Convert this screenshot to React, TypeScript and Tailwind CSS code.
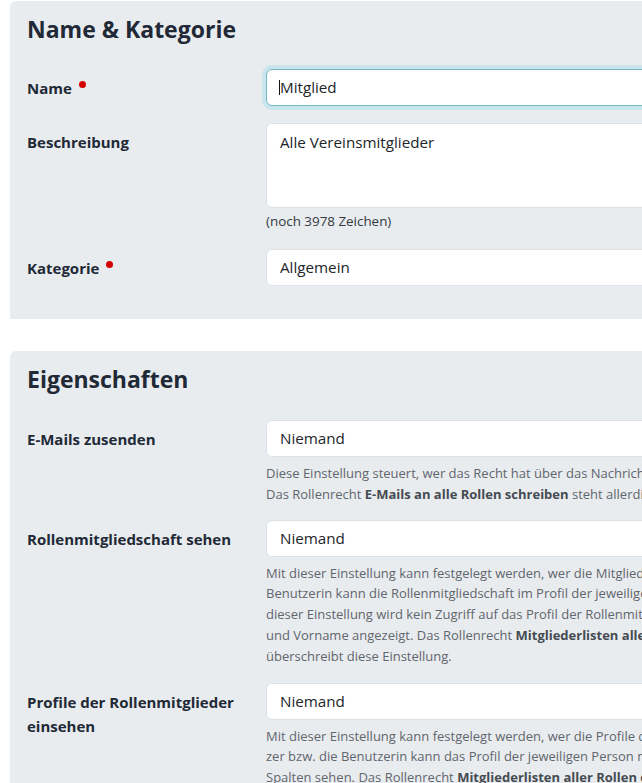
import React from 'react';

const font = { fontFamily: '"Open Sans", "Noto Sans", sans-serif' };

const Required = () => (
  <span className="inline-block w-[7px] h-[7px] rounded-full bg-[#d40000] ml-[7px] relative -top-[6px]" />
);

const Label = ({ children, required }: { children: React.ReactNode; required?: boolean }) => (
  <div className="w-[239px] shrink-0 pt-[7px] pr-4 text-[15px] leading-6 font-bold text-[#212936]">
    {children}
    {required && <Required />}
  </div>
);

const Field = ({ value, focused }: { value: string; focused?: boolean }) => (
  <div
    className={
      focused
        ? 'h-[37px] w-[640px] rounded-[6px] border border-[#72b7c2] bg-white pl-[12px] flex items-center text-[15.2px] text-[#212529] shadow-[0_0_0_4px_#c9e6ec]'
        : 'h-[37px] w-[640px] rounded-[6px] border border-[#dee2e6] bg-white pl-[13px] flex items-center text-[15.2px] text-[#212529]'
    }
  >
    {focused && <span className="inline-block w-px h-[15px] bg-[#111]" />}
    {value}
  </div>
);

const Help = ({ lines }: { lines: React.ReactNode[] }) => (
  <div className="mt-[6px] text-[13px] leading-[20.8px] text-[#5f666d] whitespace-nowrap">
    {lines.map((l, i) => (
      <div key={i}>{l}</div>
    ))}
  </div>
);

const B = ({ children }: { children: React.ReactNode }) => (
  <b className="font-bold text-[#454b52]">{children}</b>
);

const Card = ({ title, children }: { title: string; children: React.ReactNode }) => (
  <section className="w-[960px] bg-[#e9ecef] rounded-t-[6px] pt-[14px] pl-[17px] pb-[16px]">
    <h2 className="text-[23px] leading-[28px] font-bold text-[#212936] mb-[26px]">{title}</h2>
    {children}
  </section>
);

const Row = ({ children, gap = 'mb-[17px]' }: { children: React.ReactNode; gap?: string }) => (
  <div className={`flex ${gap}`}>{children}</div>
);

export default function App() {
  return (
    <div className="h-screen w-full overflow-hidden bg-white" style={font}>
      <div className="pl-[10px] pt-px">
        <Card title="Name & Kategorie">
          <Row>
            <Label required>Name</Label>
            <div>
              <Field value="Mitglied" focused />
            </div>
          </Row>
          <Row>
            <Label>Beschreibung</Label>
            <div>
              <div className="h-[85px] w-[640px] rounded-[6px] border border-[#dee2e6] bg-white pl-[13px] pt-[6px] text-[15.2px] leading-6 text-[#212529]">
                Alle Vereinsmitglieder
              </div>
              <div className="mt-[3px] text-[13.4px] leading-[21px] text-[#33393f]">(noch 3978 Zeichen)</div>
            </div>
          </Row>
          <Row gap="mb-[17px]">
            <Label required>Kategorie</Label>
            <div>
              <Field value="Allgemein" />
            </div>
          </Row>
        </Card>

        <div className="mt-8">
          <Card title="Eigenschaften">
            <div className="pt-px" />
            <Row gap="mb-[15px]">
              <Label>E-Mails zusenden</Label>
              <div>
                <Field value="Niemand" />
                <Help
                  lines={[
                    'Diese Einstellung steuert, wer das Recht hat über das Nachrichtenmodul E-Mails an diese Rolle zu schreiben.',
                    <>
                      Das Rollenrecht <B>E-Mails an alle Rollen schreiben</B> steht allerdings über dieser Einstellung.
                    </>,
                  ]}
                />
              </div>
            </Row>
            <Row gap="mb-[16px]">
              <Label>Rollenmitgliedschaft sehen</Label>
              <div>
                <Field value="Niemand" />
                <Help
                  lines={[
                    'Mit dieser Einstellung kann festgelegt werden, wer die Mitglieder dieser Rolle sehen darf. Der Benutzer bzw. die',
                    'Benutzerin kann die Rollenmitgliedschaft im Profil der jeweiligen Person sehen. Mit',
                    'dieser Einstellung wird kein Zugriff auf das Profil der Rollenmitglieder gewährt, es werden nur Name',
                    <>
                      und Vorname angezeigt. Das Rollenrecht <B>Mitgliederlisten aller Rollen einsehen</B>
                    </>,
                    'überschreibt diese Einstellung.',
                  ]}
                />
              </div>
            </Row>
            <Row>
              <Label>
                Profile der Rollenmitglieder
                <br />
                einsehen
              </Label>
              <div>
                <Field value="Niemand" />
                <Help
                  lines={[
                    'Mit dieser Einstellung kann festgelegt werden, wer die Profile der Rollenmitglieder einsehen darf. Der Benut-',
                    'zer bzw. die Benutzerin kann das Profil der jeweiligen Person mit allen Feldern sehen, die er auch in den',
                    <>
                      Spalten sehen. Das Rollenrecht <B>Mitgliederlisten aller Rollen einsehen</B> überschreibt diese Einstellung.
                    </>,
                  ]}
                />
              </div>
            </Row>
          </Card>
        </div>
      </div>
    </div>
  );
}
